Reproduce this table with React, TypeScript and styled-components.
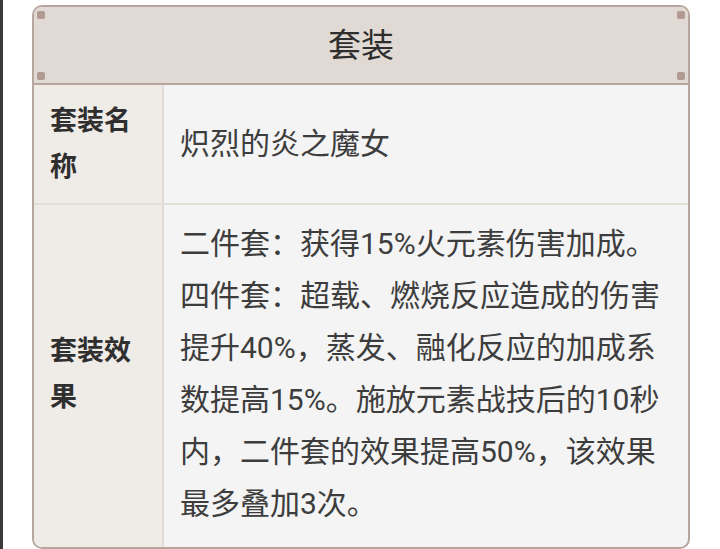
import React from "react";
import styled, { createGlobalStyle } from "styled-components";

const GlobalStyle = createGlobalStyle`
  html, body {
    margin: 0;
    padding: 0;
    background: #ffffff;
  }
  body {
    font-family: Roboto, "Noto Sans CJK SC", sans-serif;
    border-left: 3px solid #3a3a3a; /* edge of the phone frame */
    min-height: 549px;
    box-sizing: border-box;
  }
`;

const Page = styled.div`
  padding: 5px 30px 1px 29px;
`;

const Card = styled.div`
  border: 2px solid #b7a69e;
  border-radius: 10px;
  overflow: hidden;
  background: #f4f4f4;
`;

const Header = styled.div`
  position: relative;
  height: 76px;
  background: #e1d9d3;
  border-bottom: 2px solid #b7a69e;
  display: flex;
  align-items: center;
  justify-content: center;
`;

const Title = styled.h2`
  margin: 0;
  font-size: 33px;
  font-weight: 400;
  color: #2e2e2e;
  line-height: 1;
`;

const Stud = styled.span<{ $top?: boolean; $left?: boolean }>`
  position: absolute;
  width: 8px;
  height: 8px;
  border-radius: 2px;
  background: #b09a91;
  ${({ $top }) => ($top ? "top: 4px;" : "bottom: 3px;")}
  ${({ $left }) => ($left ? "left: 3px;" : "right: 3px;")}
`;

const Row = styled.div<{ $last?: boolean }>`
  display: grid;
  grid-template-columns: 130px 1fr;
  border-bottom: ${({ $last }) => ($last ? "none" : "2px solid #e3ddd8")};
`;

const Label = styled.div<{ $pad: string }>`
  background: #efebe7;
  border-right: 2px solid #e2dbd5;
  padding: ${({ $pad }) => $pad};
  padding-left: 16px;
  padding-right: 14px;
  display: flex;
  align-items: center;
  font-size: 27px;
  font-weight: 700;
  line-height: 46px;
  color: #2f2f2f;
`;

const Value = styled.div<{ $pad: string }>`
  padding: ${({ $pad }) => $pad};
  padding-left: 16px;
  padding-right: 20px;
  display: flex;
  align-items: center;
  font-size: 30px;
  line-height: 52px;
  color: #3d3d3d;
`;

export default function App() {
  return (
    <>
      <GlobalStyle />
      <Page>
        <Card>
          <Header>
            <Stud $top $left />
            <Stud $left />
            <Stud $top />
            <Stud />
            <Title>套装</Title>
          </Header>
          <Row>
            <Label $pad="13px 0">套装名称</Label>
            <Value $pad="13px 0">炽烈的炎之魔女</Value>
          </Row>
          <Row $last>
            <Label $pad="13px 0 17px">套装效果</Label>
            <Value $pad="13px 0 17px">
              <span>
                二件套：获得15%火元素伤害加成。
                <br />
                四件套：超载、燃烧反应造成的伤害提升40%，蒸发、融化反应的加成系数提高15%。施放元素战技后的10秒内，二件套的效果提高50%，该效果最多叠加3次。
              </span>
            </Value>
          </Row>
        </Card>
      </Page>
    </>
  );
}
